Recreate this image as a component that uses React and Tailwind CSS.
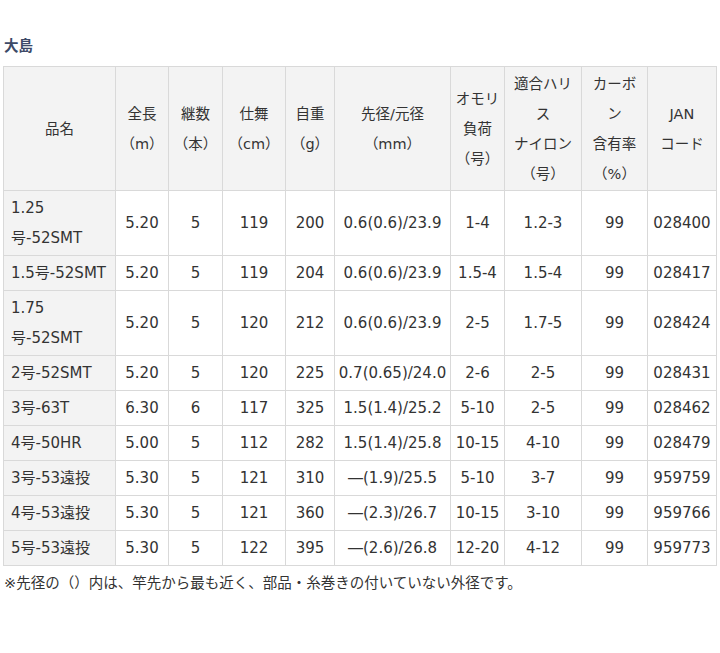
const cols = [112, 53, 54, 63, 49, 116, 54, 77, 66, 69]

const head = [
  ['品名'],
  ['全長', '（m）'],
  ['継数', '（本）'],
  ['仕舞', '（cm）'],
  ['自重', '（g）'],
  ['先径/元径', '（mm）'],
  ['オモリ', '負荷', '（号）'],
  ['適合ハリ', 'ス', 'ナイロン', '（号）'],
  ['カーボ', 'ン', '含有率', '（%）'],
  ['JAN', 'コード'],
]

const rows = [
  [['1.25', '号-52SMT'], '5.20', '5', '119', '200', '0.6(0.6)/23.9', '1-4', '1.2-3', '99', '028400'],
  [['1.5号-52SMT'], '5.20', '5', '119', '204', '0.6(0.6)/23.9', '1.5-4', '1.5-4', '99', '028417'],
  [['1.75', '号-52SMT'], '5.20', '5', '120', '212', '0.6(0.6)/23.9', '2-5', '1.7-5', '99', '028424'],
  [['2号-52SMT'], '5.20', '5', '120', '225', '0.7(0.65)/24.0', '2-6', '2-5', '99', '028431'],
  [['3号-63T'], '6.30', '6', '117', '325', '1.5(1.4)/25.2', '5-10', '2-5', '99', '028462'],
  [['4号-50HR'], '5.00', '5', '112', '282', '1.5(1.4)/25.8', '10-15', '4-10', '99', '028479'],
  [['3号-53遠投'], '5.30', '5', '121', '310', '―(1.9)/25.5', '5-10', '3-7', '99', '959759'],
  [['4号-53遠投'], '5.30', '5', '121', '360', '―(2.3)/26.7', '10-15', '3-10', '99', '959766'],
  [['5号-53遠投'], '5.30', '5', '122', '395', '―(2.6)/26.8', '12-20', '4-12', '99', '959773'],
]

const lines = (arr) =>
  arr.map((t, i) => (
    <span key={i} className="block">{t}</span>
  ))

export default function App() {
  return (
    <div className="min-h-[653px] bg-white px-[3px] text-[#333] font-['DejaVu_Sans','Noto_Sans_CJK_JP',sans-serif]">
      <div className="pt-[36px] pl-[1px] text-[14.5px] font-bold leading-[20px] text-[#3d4a68]">大島</div>

      <table className="mt-[10px] w-[714px] table-fixed border-collapse text-[15px] leading-[30px]">
        <colgroup>
          {cols.map((w, i) => (
            <col key={i} style={{ width: w }} />
          ))}
        </colgroup>
        <thead>
          <tr>
            {head.map((h, i) => (
              <th key={i} className="border border-[#d9d9d9] bg-[#f3f3f3] px-0 py-[1.5px] text-center align-middle font-normal text-[14.5px]">
                {lines(h)}
              </th>
            ))}
          </tr>
        </thead>
        <tbody>
          {rows.map((r, ri) => (
            <tr key={ri}>
              <td className="border border-[#d9d9d9] bg-[#f3f3f3] py-[2px] pl-[7px] pr-0 text-left align-middle whitespace-nowrap">
                {lines(r[0])}
              </td>
              {r.slice(1).map((c, ci) => (
                <td key={ci} className="border border-[#d9d9d9] bg-white px-0 py-[2px] text-center align-middle whitespace-nowrap">
                  {c}
                </td>
              ))}
            </tr>
          ))}
        </tbody>
      </table>

      <p className="mt-[5px] pl-[1px] text-[14.5px] leading-[24px]">
        ※先径の（）内は、竿先から最も近く、部品・糸巻きの付いていない外径です。
      </p>
    </div>
  )
}
